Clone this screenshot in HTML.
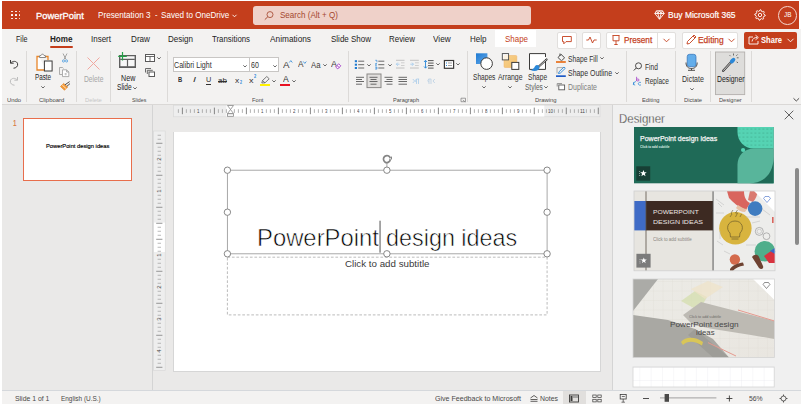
<!DOCTYPE html>
<html><head><meta charset="utf-8"><style>
html,body{margin:0;padding:0;width:801px;height:404px;overflow:hidden;background:#fff;}
body{position:relative;font-family:"Liberation Sans",sans-serif;}
.t{position:absolute;white-space:nowrap;line-height:1;transform-origin:0 50%;}
.r{position:absolute;box-sizing:border-box;}
svg{position:absolute;overflow:visible;}
</style></head><body>
<div class="r" style="left:2px;top:1px;width:797.3px;height:28.4px;background:#C43E1C"></div>
<div class="r" style="left:2px;top:29.4px;width:799px;height:75.6px;background:#F3F2F1"></div>
<div class="r" style="left:2px;top:104px;width:799px;height:1px;background:#DAD8D6"></div>
<div class="r" style="left:2px;top:105px;width:799px;height:285px;background:#EAE9E8"></div>
<div class="r" style="left:152px;top:105px;width:1px;height:285px;background:#D4D4D4"></div>
<div class="r" style="left:612px;top:105px;width:1px;height:285px;background:#D4D4D4"></div>
<div class="r" style="left:613px;top:105px;width:188px;height:285px;background:#F0F0F0"></div>
<div class="r" style="left:2px;top:389.6px;width:799px;height:1px;background:#D5D8DC"></div>
<div class="r" style="left:2px;top:390.6px;width:799px;height:14px;background:#F3F2F1"></div>
<div class="r" style="left:11.3px;top:10.5px;width:1.8px;height:1.8px;background:#fff;border-radius:0.5px"></div>
<div class="r" style="left:11.3px;top:14.1px;width:1.8px;height:1.8px;background:#fff;border-radius:0.5px"></div>
<div class="r" style="left:11.3px;top:17.7px;width:1.8px;height:1.8px;background:#fff;border-radius:0.5px"></div>
<div class="r" style="left:14.9px;top:10.5px;width:1.8px;height:1.8px;background:#fff;border-radius:0.5px"></div>
<div class="r" style="left:14.9px;top:14.1px;width:1.8px;height:1.8px;background:#fff;border-radius:0.5px"></div>
<div class="r" style="left:14.9px;top:17.7px;width:1.8px;height:1.8px;background:#fff;border-radius:0.5px"></div>
<div class="r" style="left:18.5px;top:10.5px;width:1.8px;height:1.8px;background:#fff;border-radius:0.5px"></div>
<div class="r" style="left:18.5px;top:14.1px;width:1.8px;height:1.8px;background:#fff;border-radius:0.5px"></div>
<div class="r" style="left:18.5px;top:17.7px;width:1.8px;height:1.8px;background:#fff;border-radius:0.5px"></div>
<div class="t" style="left:36.0px;top:10.7px;font-size:9.6px;font-weight:400;color:#fff;transform:scaleX(0.976);-webkit-text-stroke:0.3px #fff">PowerPoint</div>
<div class="t" style="left:97.5px;top:10.4px;font-size:9.5px;font-weight:400;color:#fff;transform:scaleX(0.857);">Presentation 3</div>
<div class="t" style="left:154.5px;top:10.4px;font-size:9.5px;font-weight:400;color:#fff;transform:scaleX(0.790);">-</div>
<div class="t" style="left:160.7px;top:10.4px;font-size:9.5px;font-weight:400;color:#fff;transform:scaleX(0.851);">Saved to OneDrive</div>
<svg style="left:232px;top:14px" width="5" height="4"><path d="M0.5 0.8 L2.5 2.8 L4.5 0.8" stroke="#fff" stroke-width="0.9" fill="none"/></svg>
<div class="r" style="left:253px;top:6px;width:278px;height:18.5px;background:#EFD1C9;border-radius:3px"></div>
<svg style="left:264px;top:11px" width="10" height="9"><circle cx="6" cy="3.6" r="3" stroke="#A9503A" stroke-width="0.9" fill="none"/><path d="M3.8 5.8 L0.8 8.6" stroke="#A9503A" stroke-width="1"/></svg>
<div class="t" style="left:280.0px;top:10.4px;font-size:9.5px;font-weight:400;color:#A4472F;transform:scaleX(0.848);">Search (Alt + Q)</div>
<svg style="left:654px;top:10px" width="11" height="10"><path d="M2.5 0.8 H8.5 L10.2 3.5 L5.5 9.2 L0.8 3.5 Z M0.8 3.5 H10.2 M3.8 3.5 L5.5 9.2 L7.2 3.5 M2.5 0.8 L3.8 3.5 L5.5 0.8 L7.2 3.5 L8.5 0.8" stroke="#fff" stroke-width="0.9" fill="none" stroke-linejoin="round"/></svg>
<div class="t" style="left:668.0px;top:10.3px;font-size:9.5px;font-weight:400;color:#fff;transform:scaleX(0.888);-webkit-text-stroke:0.2px #fff">Buy Microsoft 365</div>
<svg style="left:753.6px;top:9.1px" width="12" height="12"><path d="M6.00 0.80 L7.01 0.90 L7.49 2.40 L8.17 2.76 L9.68 2.32 L10.32 3.11 L9.60 4.51 L9.83 5.24 L11.20 6.00 L11.10 7.01 L9.60 7.49 L9.24 8.17 L9.68 9.68 L8.89 10.32 L7.49 9.60 L6.76 9.83 L6.00 11.20 L4.99 11.10 L4.51 9.60 L3.83 9.24 L2.32 9.68 L1.68 8.89 L2.40 7.49 L2.17 6.76 L0.80 6.00 L0.90 4.99 L2.40 4.51 L2.76 3.83 L2.32 2.32 L3.11 1.68 L4.51 2.40 L5.24 2.17 Z" stroke="#fff" stroke-width="0.9" fill="none" stroke-linejoin="round"/><circle cx="6" cy="6" r="1.7" stroke="#fff" stroke-width="0.9" fill="none"/></svg>
<div class="r" style="left:778.2px;top:6px;width:18.6px;height:18.6px;border:1px solid #F4D6CE;border-radius:50%"></div>
<div class="t" style="left:783.8px;top:12.2px;font-size:6.5px;font-weight:400;color:#fff;transform:scaleX(0.976);">JB</div>
<div class="t" style="left:15.5px;top:34.5px;font-size:9px;font-weight:400;color:#252423;transform:scaleX(0.793);">File</div>
<div class="t" style="left:50.0px;top:34.5px;font-size:9px;font-weight:700;color:#252423;transform:scaleX(0.900);">Home</div>
<div class="t" style="left:91.0px;top:34.5px;font-size:9px;font-weight:400;color:#252423;transform:scaleX(0.889);">Insert</div>
<div class="t" style="left:130.5px;top:34.5px;font-size:9px;font-weight:400;color:#252423;transform:scaleX(0.905);">Draw</div>
<div class="t" style="left:167.5px;top:34.5px;font-size:9px;font-weight:400;color:#252423;transform:scaleX(0.892);">Design</div>
<div class="t" style="left:212.0px;top:34.5px;font-size:9px;font-weight:400;color:#252423;transform:scaleX(0.870);">Transitions</div>
<div class="t" style="left:270.0px;top:34.5px;font-size:9px;font-weight:400;color:#252423;transform:scaleX(0.921);">Animations</div>
<div class="t" style="left:330.5px;top:34.5px;font-size:9px;font-weight:400;color:#252423;transform:scaleX(0.888);">Slide Show</div>
<div class="t" style="left:389.0px;top:34.5px;font-size:9px;font-weight:400;color:#252423;transform:scaleX(0.881);">Review</div>
<div class="t" style="left:433.0px;top:34.5px;font-size:9px;font-weight:400;color:#252423;transform:scaleX(0.915);">View</div>
<div class="t" style="left:469.5px;top:34.5px;font-size:9px;font-weight:400;color:#252423;transform:scaleX(0.891);">Help</div>
<div class="r" style="left:50px;top:45.8px;width:23px;height:2px;background:#C43E1C;border-radius:1px"></div>
<div class="r" style="left:495px;top:30px;width:41px;height:17px;background:#fff"></div>
<div class="t" style="left:504.5px;top:34.5px;font-size:9px;font-weight:400;color:#C43E1C;transform:scaleX(0.884);">Shape</div>
<div class="r" style="left:557px;top:31.5px;width:20px;height:17px;background:#fff;border:1px solid #E1DFDD;border-radius:2px"></div>
<div class="r" style="left:581.5px;top:31.5px;width:19.5px;height:17px;background:#fff;border:1px solid #E1DFDD;border-radius:2px"></div>
<svg style="left:562px;top:36.3px" width="10" height="9"><path d="M0.5 0.5 H9.3 V5.6 H4 L1.8 7.8 V5.6 H0.5 Z" stroke="#C43E1C" stroke-width="0.9" fill="none" stroke-linejoin="round"/></svg>
<svg style="left:585.5px;top:36px" width="11" height="8"><path d="M0.3 4 H2.5 L4 1 L6.5 7 L8 4 H10.7" stroke="#C43E1C" stroke-width="0.9" fill="none" stroke-linejoin="round"/></svg>
<div class="r" style="left:606px;top:31.5px;width:70px;height:17px;background:#fff;border:1px solid #E1DFDD;border-radius:2px"></div>
<div class="r" style="left:657px;top:32.5px;width:1px;height:15px;background:#E1DFDD"></div>
<svg style="left:612px;top:35px" width="8" height="10"><path d="M0.5 0.5 H7.5 M1 0.5 V5.8 H7 V0.5 M4 5.8 V9.5 M2.3 9.5 H5.7" stroke="#C43E1C" stroke-width="0.9" fill="none"/></svg>
<div class="t" style="left:623.8px;top:35.2px;font-size:9.5px;font-weight:400;color:#C43E1C;transform:scaleX(0.861);-webkit-text-stroke:0.25px #C43E1C">Present</div>
<svg style="left:663px;top:38px" width="7" height="5"><path d="M0.5 0.8 L3.5 3.8 L6.5 0.8" stroke="#C43E1C" stroke-width="0.9" fill="none"/></svg>
<div class="r" style="left:682px;top:31.5px;width:56px;height:17px;background:#fff;border:1px solid #E1DFDD;border-radius:2px"></div>
<svg style="left:686px;top:34px" width="11" height="11"><path d="M1 10 L1.5 7.5 L8 1 L10 3 L3.5 9.5 Z M7 2 L9 4" stroke="#C43E1C" stroke-width="0.9" fill="none" stroke-linejoin="round"/></svg>
<div class="t" style="left:698.3px;top:35.2px;font-size:9.5px;font-weight:400;color:#C43E1C;transform:scaleX(0.885);-webkit-text-stroke:0.25px #C43E1C">Editing</div>
<svg style="left:728px;top:38px" width="7" height="5"><path d="M0.5 0.8 L3.5 3.8 L6.5 0.8" stroke="#C43E1C" stroke-width="0.9" fill="none"/></svg>
<div class="r" style="left:744px;top:31.5px;width:53px;height:17px;background:#C43E1C;border-radius:2px"></div>
<svg style="left:748px;top:34px" width="12" height="11"><path d="M5 3 H1 V10 H10 V7 M4 7.5 C4.5 4.5 6.5 3.5 9 3.5 M7.5 1.2 L10.3 3.5 L7.5 5.8" stroke="#fff" stroke-width="0.9" fill="none" stroke-linejoin="round"/></svg>
<div class="t" style="left:761.2px;top:35.2px;font-size:9.5px;font-weight:700;color:#fff;transform:scaleX(0.799);">Share</div>
<svg style="left:787px;top:38px" width="7" height="5"><path d="M0.5 0.8 L3.5 3.8 L6.5 0.8" stroke="#fff" stroke-width="0.9" fill="none"/></svg>
<svg style="left:9px;top:59px" width="10" height="10"><path d="M1.5 1 V4.2 H4.7 M1.8 4 C3.5 1.8 7.8 1.6 8.6 4.8 C9.2 7.4 6.8 9.2 4.5 9.2" stroke="#3b3a39" stroke-width="1" fill="none"/></svg>
<svg style="left:9px;top:75.5px" width="10" height="10"><path d="M8.5 1 V4.2 H5.3 M8.2 4 C6.5 1.8 2.2 1.6 1.4 4.8 C0.8 7.4 3.2 9.2 5.5 9.2" stroke="#BDBDBD" stroke-width="1" fill="none"/></svg>
<div class="t" style="left:6.7px;top:96.9px;font-size:6px;font-weight:400;color:#4a4948;transform:scaleX(0.983);">Undo</div>
<div class="r" style="left:26px;top:51px;width:1px;height:51px;background:#DCDAD8"></div>
<svg style="left:35px;top:52.5px" width="19" height="19"><path d="M4 3.5 H2 V17 H11" stroke="#E8862A" stroke-width="1.3" fill="#fff"/><path d="M9 3.5 H13 V7" stroke="#E8862A" stroke-width="1.3" fill="none"/><path d="M4.5 4.5 V2.8 L6 2.5 L7.5 0.8 L9 2.5 L10.5 2.8 V4.5 Z" stroke="#7a7a7a" stroke-width="0.9" fill="#fff"/><rect x="9.4" y="8" width="7.7" height="10" stroke="#3b3a39" stroke-width="1" fill="#fff"/></svg>
<div class="t" style="left:34.9px;top:73.1px;font-size:8.3px;font-weight:400;color:#252423;transform:scaleX(0.759);">Paste</div>
<svg style="left:40.7px;top:86.1px" width="4" height="2.5"><path d="M0.3 0.3 L2 2 L3.7 0.3" stroke="#444" stroke-width="0.8" fill="none"/></svg>
<svg style="left:60.5px;top:53px" width="8" height="10"><path d="M2 0.5 L5 6.5 M6 0.5 L3 6.5" stroke="#8f8f8f" stroke-width="0.8"/><circle cx="2.5" cy="8" r="1.1" stroke="#4d9de0" stroke-width="0.8" fill="none"/><circle cx="5.6" cy="8" r="1.1" stroke="#4d9de0" stroke-width="0.8" fill="none"/></svg>
<svg style="left:59px;top:67px" width="11" height="11"><path d="M4.5 1.5 L3.6 0.5 H0.5 V7.5 H3" stroke="#9a9a9a" stroke-width="0.8" fill="none"/><path d="M3.5 2.8 H7.6 L9.8 5 V9.6 H3.5 Z M7.6 2.8 V5 H9.8" stroke="#9a9a9a" stroke-width="0.8" fill="#fff"/><rect x="6" y="6.5" width="1.5" height="1.5" fill="none" stroke="#bbb" stroke-width="0.5"/></svg>
<svg style="left:59.5px;top:81px" width="11" height="10"><path d="M0.5 5.5 L4.5 9.2 L7.6 6 L3.6 2.4 Z" fill="#F29A38" stroke="#E07B14" stroke-width="0.6"/><path d="M2.2 4 L6 7.5" stroke="#fff" stroke-width="0.7"/><path d="M5 3.8 L9.6 0.6 M6.8 5.4 L10 2.6" stroke="#3b3a39" stroke-width="0.9"/></svg>
<div class="t" style="left:38.8px;top:96.9px;font-size:6px;font-weight:400;color:#4a4948;transform:scaleX(0.981);">Clipboard</div>
<div class="r" style="left:76px;top:51px;width:1px;height:51px;background:#DCDAD8"></div>
<svg style="left:87px;top:57px" width="13" height="13"><path d="M0.5 0.5 L12.5 12.5 M12.5 0.5 L0.5 12.5" stroke="#F0A8A0" stroke-width="1"/></svg>
<div class="t" style="left:83.6px;top:75.0px;font-size:8.3px;font-weight:400;color:#A6A6A6;transform:scaleX(0.809);">Delete</div>
<div class="t" style="left:85.0px;top:96.9px;font-size:6px;font-weight:400;color:#C6C6C6;transform:scaleX(0.963);">Delete</div>
<div class="r" style="left:110px;top:51px;width:1px;height:51px;background:#DCDAD8"></div>
<svg style="left:118px;top:52px" width="20" height="17"><path d="M1.7 3.6 H17.3 V15.2 H1.7 Z" stroke="#5f5f5f" stroke-width="1.4" fill="#F7F7F7"/><path d="M1.5 15 H17.5" stroke="#5f5f5f" stroke-width="1.2"/><path d="M2.2 7.4 H16.8 M9.5 7.4 V14.8" stroke="#5f5f5f" stroke-width="1.2"/><path d="M4.5 0 V8.6 M0.2 4.3 H8.8" stroke="#22A046" stroke-width="1.2"/></svg>
<div class="t" style="left:120.7px;top:74.1px;font-size:8.3px;font-weight:400;color:#252423;transform:scaleX(0.861);">New</div>
<div class="t" style="left:116.9px;top:83.1px;font-size:8.3px;font-weight:400;color:#252423;transform:scaleX(0.791);">Slide</div>
<svg style="left:132.5px;top:86.8px" width="4" height="2.5"><path d="M0.3 0.3 L2 2 L3.7 0.3" stroke="#444" stroke-width="0.8" fill="none"/></svg>
<svg style="left:145px;top:54px" width="10" height="8"><rect x="0.5" y="0.5" width="9" height="7" stroke="#5a5a5a" stroke-width="1" fill="#fff"/><path d="M0.5 2.5 H9.5 M5 2.5 V7.5" stroke="#5a5a5a" stroke-width="0.9"/></svg>
<svg style="left:157px;top:57.3px" width="4" height="2.5"><path d="M0.3 0.3 L2 2 L3.7 0.3" stroke="#444" stroke-width="0.8" fill="none"/></svg>
<svg style="left:145px;top:67.5px" width="10" height="9"><path d="M0.5 0.5 H6 M0.5 0.5 V4.5 M2.3 2.3 H7.8 M2.3 2.3 V6" stroke="#5a5a5a" stroke-width="0.9" fill="none"/><rect x="4" y="4" width="5.5" height="4.5" stroke="#5a5a5a" stroke-width="1" fill="#fff"/></svg>
<div class="t" style="left:132.2px;top:96.9px;font-size:6px;font-weight:400;color:#4a4948;transform:scaleX(0.875);">Slides</div>
<div class="r" style="left:167px;top:51px;width:1px;height:51px;background:#DCDAD8"></div>
<div class="r" style="left:172.5px;top:57px;width:106px;height:14.5px;background:#fff;border:1px solid #C8C6C4"></div>
<div class="r" style="left:248.5px;top:57px;width:1px;height:14.5px;background:#C8C6C4"></div>
<div class="t" style="left:174.4px;top:60.5px;font-size:8.5px;font-weight:400;color:#323130;transform:scaleX(0.838);">Calibri Light</div>
<svg style="left:242.5px;top:64.6px" width="4" height="2.5"><path d="M0.3 0.3 L2 2 L3.7 0.3" stroke="#444" stroke-width="0.8" fill="none"/></svg>
<div class="t" style="left:250.6px;top:60.5px;font-size:8.5px;font-weight:400;color:#323130;transform:scaleX(0.825);">60</div>
<svg style="left:272.7px;top:64.8px" width="4" height="2.5"><path d="M0.3 0.3 L2 2 L3.7 0.3" stroke="#444" stroke-width="0.8" fill="none"/></svg>
<div class="t" style="left:283.0px;top:59.5px;font-size:9.5px;font-weight:400;color:#3b3a39;transform:scaleX(1.026);">A</div>
<svg style="left:289px;top:60px" width="4" height="3"><path d="M0.3 2.5 L1.8 0.6 L3.3 2.5" stroke="#2B88D8" stroke-width="0.8" fill="none"/></svg>
<div class="t" style="left:298.0px;top:60.7px;font-size:8.2px;font-weight:400;color:#3b3a39;transform:scaleX(1.006);">A</div>
<svg style="left:303px;top:60.5px" width="4" height="3"><path d="M0.3 0.5 L1.8 2.4 L3.3 0.5" stroke="#2B88D8" stroke-width="0.8" fill="none"/></svg>
<div class="t" style="left:311.0px;top:60.8px;font-size:8.5px;font-weight:400;color:#3b3a39;transform:scaleX(0.914);">Aa</div>
<svg style="left:322.5px;top:64.3px" width="4" height="2.5"><path d="M0.3 0.3 L2 2 L3.7 0.3" stroke="#444" stroke-width="0.8" fill="none"/></svg>
<div class="t" style="left:331.0px;top:59.8px;font-size:9px;font-weight:400;color:#3b3a39;transform:scaleX(0.999);">A</div>
<svg style="left:335px;top:63px" width="6.5" height="6.5"><path d="M0.6 4 L3.6 0.8 L5.8 2.8 L2.8 5.9 Z M2 2.6 L4.4 4.6" stroke="#A33DC6" stroke-width="0.9" fill="#fff"/></svg>
<div class="t" style="left:178.0px;top:76.4px;font-size:8px;font-weight:700;color:#323130;transform:scaleX(0.727);">B</div>
<div class="t" style="left:192.5px;top:76.4px;font-size:8px;font-weight:400;color:#323130;transform:scaleX(1.350);font-style:italic">I</div>
<div class="t" style="left:205.5px;top:75.8px;font-size:8px;font-weight:400;color:#323130;transform:scaleX(0.917);">U</div>
<div class="r" style="left:205.5px;top:84px;width:5.5px;height:0.8px;background:#323130"></div>
<div class="t" style="left:218.0px;top:76.8px;font-size:7.5px;font-weight:400;color:#323130;transform:scaleX(1.055);">ab</div>
<div class="r" style="left:217.8px;top:80.5px;width:9.2px;height:0.8px;background:#323130"></div>
<div class="t" style="left:234.8px;top:76.8px;font-size:8px;font-weight:400;color:#323130;transform:scaleX(1.050);">x</div>
<div class="t" style="left:239.5px;top:80.8px;font-size:4.5px;font-weight:700;color:#2B88D8;transform:scaleX(0.799);">2</div>
<div class="t" style="left:249.0px;top:76.8px;font-size:8px;font-weight:400;color:#323130;transform:scaleX(1.125);">x</div>
<div class="t" style="left:253.8px;top:74.8px;font-size:4.5px;font-weight:700;color:#2B88D8;transform:scaleX(0.879);">2</div>
<svg style="left:261px;top:76px" width="9" height="8"><path d="M0.8 7 L1.5 4.5 L5.8 0.5 L8.2 2.8 L4 6.8 Z M1.5 4.5 L4 6.8" stroke="#5a5a5a" stroke-width="0.8" fill="none" stroke-linejoin="round"/></svg>
<div class="r" style="left:260.4px;top:84px;width:9.4px;height:2px;background:#FFF100"></div>
<svg style="left:272.4px;top:80.2px" width="4" height="2.5"><path d="M0.3 0.3 L2 2 L3.7 0.3" stroke="#444" stroke-width="0.8" fill="none"/></svg>
<div class="t" style="left:282.7px;top:75.9px;font-size:8.2px;font-weight:400;color:#323130;transform:scaleX(1.060);">A</div>
<div class="r" style="left:280.4px;top:84px;width:9.6px;height:2px;background:#E81123"></div>
<svg style="left:292.4px;top:80.2px" width="4" height="2.5"><path d="M0.3 0.3 L2 2 L3.7 0.3" stroke="#444" stroke-width="0.8" fill="none"/></svg>
<div class="t" style="left:252.0px;top:96.9px;font-size:6px;font-weight:400;color:#4a4948;transform:scaleX(0.950);">Font</div>
<div class="r" style="left:347.5px;top:51px;width:1px;height:51px;background:#DCDAD8"></div>
<svg style="left:0;top:0" width="801" height="404"><rect x="354.8" y="60.2" width="2.2" height="2" fill="#1F7BD0"/><rect x="354.8" y="63.7" width="2.2" height="2" fill="#1F7BD0"/><rect x="354.8" y="67" width="2.2" height="2" fill="#1F7BD0"/><path d="M358.2 61.2 h6" stroke="#5a5a5a" stroke-width="0.9"/><path d="M358.2 64.7 h6" stroke="#5a5a5a" stroke-width="0.9"/><path d="M358.2 68 h6" stroke="#5a5a5a" stroke-width="0.9"/><path d="M375.3 60.3 h1.6 v2 M375.2 63.6 h1.6 l-1.6 1.6 h1.8 M375.2 67 h1.7 v2.1 h-1.7 M375.4 68 h1.4" stroke="#2B88D8" stroke-width="0.7" fill="none"/><path d="M378.3 61.2 h6" stroke="#5a5a5a" stroke-width="0.9"/><path d="M378.3 64.7 h6" stroke="#5a5a5a" stroke-width="0.9"/><path d="M378.3 68 h6" stroke="#5a5a5a" stroke-width="0.9"/><path d="M396 60.3 h8.5" stroke="#B5B5B5" stroke-width="0.8"/><path d="M396 68 h8.5" stroke="#B5B5B5" stroke-width="0.8"/><path d="M401 62.8 h3.5" stroke="#C5C5C5" stroke-width="0.8"/><path d="M401 65.5 h3.5" stroke="#C5C5C5" stroke-width="0.8"/><path d="M399.5 64.2 h-3 M397.8 62.6 l-1.5 1.6 l1.5 1.6" stroke="#9CC8EE" stroke-width="0.8" fill="none"/><path d="M410 60.3 h8.8" stroke="#B5B5B5" stroke-width="0.8"/><path d="M410 68 h8.8" stroke="#B5B5B5" stroke-width="0.8"/><path d="M415 62.8 h3.8" stroke="#C5C5C5" stroke-width="0.8"/><path d="M415 65.5 h3.8" stroke="#C5C5C5" stroke-width="0.8"/><path d="M410.3 64.2 h3 M412 62.6 l1.5 1.6 l-1.5 1.6" stroke="#9CC8EE" stroke-width="0.8" fill="none"/><path d="M425.5 60.5 v7.5 M424 62 l1.5 -1.7 l1.5 1.7 M424 66.5 l1.5 1.7 l1.5 -1.7" stroke="#2B88D8" stroke-width="0.9" fill="none"/><path d="M428 60.6 h5.6" stroke="#444" stroke-width="0.9"/><path d="M428 63.1 h5.6" stroke="#444" stroke-width="0.9"/><path d="M428 65.6 h5.6" stroke="#444" stroke-width="0.9"/><path d="M428 68.1 h5.6" stroke="#444" stroke-width="0.9"/><rect x="444.4" y="60.5" width="9.2" height="7.8" stroke="#3b3a39" stroke-width="1.2" fill="#fff"/><rect x="446" y="62.5" width="1" height="1" fill="#2B88D8"/><rect x="446" y="65" width="1" height="1" fill="#2B88D8"/><path d="M448 63 h4" stroke="#7a7a7a" stroke-width="0.7"/><path d="M448 65.5 h4" stroke="#7a7a7a" stroke-width="0.7"/><rect x="367" y="74" width="14" height="13.6" stroke="#8A8886" stroke-width="1" fill="#E1DFDD"/><path d="M356 77.3 h8" stroke="#5a5a5a" stroke-width="0.9"/><path d="M356 79.5 h6" stroke="#5a5a5a" stroke-width="0.9"/><path d="M356 81.5 h8" stroke="#5a5a5a" stroke-width="0.9"/><path d="M356 84.2 h6" stroke="#5a5a5a" stroke-width="0.9"/><path d="M369.5 77.3 h8" stroke="#5a5a5a" stroke-width="0.9"/><path d="M370.5 79.5 h6" stroke="#5a5a5a" stroke-width="0.9"/><path d="M369.5 81.5 h8" stroke="#5a5a5a" stroke-width="0.9"/><path d="M370.5 84.2 h6" stroke="#5a5a5a" stroke-width="0.9"/><path d="M384.5 77.3 h8" stroke="#5a5a5a" stroke-width="0.9"/><path d="M386.5 79.5 h6" stroke="#5a5a5a" stroke-width="0.9"/><path d="M384.5 81.5 h8" stroke="#5a5a5a" stroke-width="0.9"/><path d="M386.5 84.2 h6" stroke="#5a5a5a" stroke-width="0.9"/><path d="M398.5 77.3 h8.5" stroke="#5a5a5a" stroke-width="0.9"/><path d="M398.5 79.5 h8.5" stroke="#5a5a5a" stroke-width="0.9"/><path d="M398.5 81.5 h8.5" stroke="#5a5a5a" stroke-width="0.9"/><path d="M398.5 84.2 h8.5" stroke="#5a5a5a" stroke-width="0.9"/><path d="M412.8 79 l1.8 2 l-1.8 2 M416.5 79 v5 M418.5 79 v5 M416.5 79 h2.6 M416.5 79.5 a1.2 1.2 0 0 0 0 2.4" stroke="#A9CBEA" stroke-width="0.8" fill="none"/><path d="M434.8 79 l-1.8 2 l1.8 2 M429 79 v5 M431 79 v5 M428.5 79 h2.6 M429 79.5 a1.2 1.2 0 0 0 0 2.4" stroke="#B9CFE3" stroke-width="0.8" fill="none"/><path d="M461 98.2 h4.5 v3.5 M461 98.2 v3.5 h4.5 M462.8 100 l2.5 2" stroke="#7a7a7a" stroke-width="0.7" fill="none"/></svg>
<svg style="left:367.3px;top:63.5px" width="4" height="2.5"><path d="M0.3 0.3 L2 2 L3.7 0.3" stroke="#444" stroke-width="0.8" fill="none"/></svg>
<svg style="left:387.6px;top:63.5px" width="4" height="2.5"><path d="M0.3 0.3 L2 2 L3.7 0.3" stroke="#444" stroke-width="0.8" fill="none"/></svg>
<svg style="left:435.8px;top:63.39999999999999px" width="4" height="2.5"><path d="M0.3 0.3 L2 2 L3.7 0.3" stroke="#444" stroke-width="0.8" fill="none"/></svg>
<svg style="left:455.8px;top:63.39999999999999px" width="4" height="2.5"><path d="M0.3 0.3 L2 2 L3.7 0.3" stroke="#444" stroke-width="0.8" fill="none"/></svg>
<div class="t" style="left:393.0px;top:96.9px;font-size:6px;font-weight:400;color:#4a4948;transform:scaleX(0.928);">Paragraph</div>
<div class="r" style="left:466.5px;top:51px;width:1px;height:51px;background:#DCDAD8"></div>
<svg style="left:0;top:0" width="801" height="404"><defs><linearGradient id="gb" x1="0" y1="0" x2="1" y2="1"><stop offset="0" stop-color="#1E7AD2"/><stop offset="1" stop-color="#63A9EA"/></linearGradient><linearGradient id="go" x1="0" y1="0" x2="1" y2="1"><stop offset="0" stop-color="#F7D28F"/><stop offset="1" stop-color="#F3BF6A"/></linearGradient></defs><rect x="476" y="53.3" width="11.4" height="10.7" fill="url(#gb)"/><circle cx="486.6" cy="63.6" r="5.8" fill="#fff" stroke="#3b3a39" stroke-width="1"/><rect x="504" y="55.5" width="12.8" height="12" rx="1" fill="url(#go)" stroke="#F0B062" stroke-width="0.5"/><rect x="502.3" y="53.6" width="6.3" height="6.3" fill="#fff" fill-opacity="0.75" stroke="#4a4a4a" stroke-width="0.9"/><rect x="511.8" y="62.4" width="7" height="7" fill="#fff" stroke="#3b3a39" stroke-width="1"/><path d="M545.5 59 V69.4 H529.5 V53.6 H545.5 V57" stroke="#3b3a39" stroke-width="1" fill="#fff"/><path d="M546.6 59.4 L538.8 66.6" stroke="#3b3a39" stroke-width="2" stroke-linecap="round"/><path d="M546.3 59.7 L539.2 66.3" stroke="#fff" stroke-width="0.7" stroke-linecap="round"/><path d="M530.5 70 C532.5 69.8 534 68.2 535 66.2 C536 64.8 538 64.8 539 66 C540 67.4 539.4 69 538 70 C536 71.3 533 71.2 530.5 70 Z" fill="#2B88D8"/><path d="M558 57.5 L561 54.3 L564.6 57.8 L561.5 60.8 Z M560 53.5 V56" stroke="#3b3a39" stroke-width="0.9" fill="none" stroke-linejoin="round"/><rect x="556" y="61.2" width="9.8" height="1.6" fill="#E8680E"/><path d="M557 73.5 V67.6 H563" stroke="#9a9a9a" stroke-width="0.8" fill="none"/><path d="M558.5 73.5 L559 71.8 L564 67 L565.3 68.3 L560.3 73.1 Z" stroke="#2B88D8" stroke-width="0.9" fill="none" stroke-linejoin="round"/><rect x="556" y="75.3" width="9.8" height="1.7" fill="#1E5BC6"/><path d="M557.2 86.5 V83.6 H562" stroke="#7a7a7a" stroke-width="0.8" fill="none"/><rect x="558.8" y="85" width="5.8" height="4.8" stroke="#5a5a5a" stroke-width="0.9" fill="#fff"/></svg>
<div class="t" style="left:473.0px;top:73.2px;font-size:8.5px;font-weight:400;color:#323130;transform:scaleX(0.777);">Shapes</div>
<svg style="left:482px;top:85.6px" width="4" height="2.5"><path d="M0.3 0.3 L2 2 L3.7 0.3" stroke="#444" stroke-width="0.8" fill="none"/></svg>
<div class="t" style="left:498.0px;top:73.2px;font-size:8.5px;font-weight:400;color:#323130;transform:scaleX(0.810);">Arrange</div>
<svg style="left:508.1px;top:85.6px" width="4" height="2.5"><path d="M0.3 0.3 L2 2 L3.7 0.3" stroke="#444" stroke-width="0.8" fill="none"/></svg>
<div class="t" style="left:528.0px;top:73.2px;font-size:8.5px;font-weight:400;color:#323130;transform:scaleX(0.777);">Shape</div>
<div class="t" style="left:525.2px;top:82.5px;font-size:8.5px;font-weight:400;color:#605E5C;transform:scaleX(0.769);">Styles</div>
<svg style="left:544px;top:85.6px" width="4" height="2.5"><path d="M0.3 0.3 L2 2 L3.7 0.3" stroke="#444" stroke-width="0.8" fill="none"/></svg>
<div class="t" style="left:568.0px;top:54.9px;font-size:8.5px;font-weight:400;color:#323130;transform:scaleX(0.788);">Shape Fill</div>
<svg style="left:600px;top:57.3px" width="4" height="2.5"><path d="M0.3 0.3 L2 2 L3.7 0.3" stroke="#444" stroke-width="0.8" fill="none"/></svg>
<div class="t" style="left:568.0px;top:68.8px;font-size:8.5px;font-weight:400;color:#323130;transform:scaleX(0.817);">Shape Outline</div>
<svg style="left:614.8px;top:71.6px" width="4" height="2.5"><path d="M0.3 0.3 L2 2 L3.7 0.3" stroke="#444" stroke-width="0.8" fill="none"/></svg>
<div class="t" style="left:568.4px;top:82.5px;font-size:8.5px;font-weight:400;color:#807F7E;transform:scaleX(0.818);">Duplicate</div>
<div class="t" style="left:535.4px;top:96.9px;font-size:6px;font-weight:400;color:#4a4948;transform:scaleX(0.981);">Drawing</div>
<div class="r" style="left:625.5px;top:51px;width:1px;height:51px;background:#DCDAD8"></div>
<svg style="left:0;top:0" width="801" height="404"><circle cx="638.5" cy="65.8" r="3" stroke="#3b3a39" stroke-width="0.9" fill="none"/><path d="M636.3 68 L633.8 70.5" stroke="#3b3a39" stroke-width="1"/><path d="M636.6 76.8 V81 M636.6 79.6 C637 78.6 639 78.6 639 80 C639 81.4 637 81.4 636.6 80.4" stroke="#A33DC6" stroke-width="0.8" fill="none"/><path d="M633.8 82.2 L633.3 84.5 L635.2 85 M633.5 84.4 C633.5 81.8 635.5 81.2 636.2 82" stroke="#2B88D8" stroke-width="0.8" fill="none"/><path d="M641 82.6 C640 82 638.6 82.3 638.3 83.5 C638.2 85 640 85.6 641 84.8" stroke="#2B88D8" stroke-width="0.8" fill="none"/><rect x="687.2" y="54.3" width="8.8" height="12.4" rx="2.4" ry="2.4" fill="#63ADEA" stroke="#2F6FB5" stroke-width="0.7"/><path d="M686 62.5 C686 66.5 688 68.5 691.5 68.5 C695 68.5 697.2 66.5 697.2 62.5 M691.5 68.5 V70.2 M688 70.3 H695" stroke="#3b3a39" stroke-width="0.9" fill="none"/><rect x="715.5" y="52" width="29.2" height="42.6" fill="#DEDDDB" stroke="#B3B0AD" stroke-width="0.9"/><path d="M723.2 70.8 L731 62.3" stroke="#3b3a39" stroke-width="2.3" stroke-linecap="round"/><path d="M723.5 70.4 L730.6 62.7" stroke="#fff" stroke-width="0.8" stroke-linecap="round"/><ellipse cx="732.6" cy="60.6" rx="2" ry="3.2" transform="rotate(42 732.6 60.6)" fill="#2B88D8"/><path d="M733.5 53.5 v2 M738.6 57.8 h-1.8 M737.6 54.5 l-1.3 1.3 M729.6 55.2 l1 1 M738 62.8 l-1.4 -0.9" stroke="#3b3a39" stroke-width="0.7"/><path d="M793.5 98.3 L796.3 101 L799.1 98.3" stroke="#3b3a39" stroke-width="0.9" fill="none"/></svg>
<div class="t" style="left:644.7px;top:62.5px;font-size:8.5px;font-weight:400;color:#323130;transform:scaleX(0.780);">Find</div>
<div class="t" style="left:645.1px;top:77.0px;font-size:8.5px;font-weight:400;color:#323130;transform:scaleX(0.766);">Replace</div>
<div class="t" style="left:641.5px;top:96.9px;font-size:6px;font-weight:400;color:#4a4948;transform:scaleX(0.954);">Editing</div>
<div class="r" style="left:675.2px;top:51px;width:1px;height:51px;background:#DCDAD8"></div>
<div class="t" style="left:681.8px;top:75.3px;font-size:8.5px;font-weight:400;color:#323130;transform:scaleX(0.828);">Dictate</div>
<svg style="left:690.3px;top:88.1px" width="4" height="2.5"><path d="M0.3 0.3 L2 2 L3.7 0.3" stroke="#444" stroke-width="0.8" fill="none"/></svg>
<div class="t" style="left:683.6px;top:96.9px;font-size:6px;font-weight:400;color:#4a4948;transform:scaleX(0.964);">Dictate</div>
<div class="r" style="left:709.5px;top:51px;width:1px;height:51px;background:#DCDAD8"></div>
<div class="t" style="left:716.8px;top:75.0px;font-size:8.5px;font-weight:400;color:#252423;transform:scaleX(0.808);">Designer</div>
<div class="t" style="left:718.9px;top:96.9px;font-size:6px;font-weight:400;color:#4a4948;transform:scaleX(0.945);">Designer</div>
<div class="r" style="left:750.8px;top:51px;width:1px;height:51px;background:#DCDAD8"></div>
<div class="t" style="left:12.6px;top:117.5px;font-size:9.5px;font-weight:400;color:#D9773F;transform:scaleX(0.681);-webkit-text-stroke:0.2px #D9773F">1</div>
<div class="r" style="left:23.2px;top:117.9px;width:108.9px;height:62.8px;background:#fff;border:1.7px solid #E86E4C"></div>
<div class="t" style="left:46.0px;top:144.2px;font-size:5.5px;font-weight:400;color:#000;transform:scaleX(1.047);-webkit-text-stroke:0.15px #000">PowerPoint design ideas</div>
<svg style="left:0;top:0" width="801" height="404"><rect x="173.5" y="105.2" width="426.5" height="11.6" fill="#EEEEEE" stroke="#D9D9D9" stroke-width="0.7"/><rect x="226.3" y="105.6" width="318" height="10.9" fill="#FFFFFF"/><rect x="177.9" y="109.2" width="0.8" height="3.7" fill="#A0A0A0"/><rect x="181.9" y="107.6" width="0.9" height="6.6" fill="#7a7a7a"/><rect x="185.9" y="109.2" width="0.8" height="3.7" fill="#A0A0A0"/><rect x="189.9" y="109.2" width="0.8" height="3.7" fill="#A0A0A0"/><rect x="193.9" y="109.2" width="0.8" height="3.7" fill="#A0A0A0"/><rect x="201.9" y="109.2" width="0.8" height="3.7" fill="#A0A0A0"/><rect x="205.9" y="109.2" width="0.8" height="3.7" fill="#A0A0A0"/><rect x="209.9" y="109.2" width="0.8" height="3.7" fill="#A0A0A0"/><rect x="213.9" y="107.6" width="0.9" height="6.6" fill="#7a7a7a"/><rect x="217.9" y="109.2" width="0.8" height="3.7" fill="#A0A0A0"/><rect x="221.9" y="109.2" width="0.8" height="3.7" fill="#A0A0A0"/><rect x="225.9" y="109.2" width="0.8" height="3.7" fill="#A0A0A0"/><rect x="233.9" y="109.2" width="0.8" height="3.7" fill="#A0A0A0"/><rect x="237.9" y="109.2" width="0.8" height="3.7" fill="#A0A0A0"/><rect x="241.9" y="109.2" width="0.8" height="3.7" fill="#A0A0A0"/><rect x="245.9" y="107.6" width="0.9" height="6.6" fill="#7a7a7a"/><rect x="249.9" y="109.2" width="0.8" height="3.7" fill="#A0A0A0"/><rect x="253.9" y="109.2" width="0.8" height="3.7" fill="#A0A0A0"/><rect x="257.9" y="109.2" width="0.8" height="3.7" fill="#A0A0A0"/><rect x="265.9" y="109.2" width="0.8" height="3.7" fill="#A0A0A0"/><rect x="269.9" y="109.2" width="0.8" height="3.7" fill="#A0A0A0"/><rect x="273.9" y="109.2" width="0.8" height="3.7" fill="#A0A0A0"/><rect x="277.9" y="107.6" width="0.9" height="6.6" fill="#7a7a7a"/><rect x="281.9" y="109.2" width="0.8" height="3.7" fill="#A0A0A0"/><rect x="285.9" y="109.2" width="0.8" height="3.7" fill="#A0A0A0"/><rect x="289.9" y="109.2" width="0.8" height="3.7" fill="#A0A0A0"/><rect x="297.9" y="109.2" width="0.8" height="3.7" fill="#A0A0A0"/><rect x="301.9" y="109.2" width="0.8" height="3.7" fill="#A0A0A0"/><rect x="305.9" y="109.2" width="0.8" height="3.7" fill="#A0A0A0"/><rect x="309.9" y="107.6" width="0.9" height="6.6" fill="#7a7a7a"/><rect x="313.9" y="109.2" width="0.8" height="3.7" fill="#A0A0A0"/><rect x="317.9" y="109.2" width="0.8" height="3.7" fill="#A0A0A0"/><rect x="321.9" y="109.2" width="0.8" height="3.7" fill="#A0A0A0"/><rect x="329.9" y="109.2" width="0.8" height="3.7" fill="#A0A0A0"/><rect x="333.9" y="109.2" width="0.8" height="3.7" fill="#A0A0A0"/><rect x="337.9" y="109.2" width="0.8" height="3.7" fill="#A0A0A0"/><rect x="341.9" y="107.6" width="0.9" height="6.6" fill="#7a7a7a"/><rect x="345.9" y="109.2" width="0.8" height="3.7" fill="#A0A0A0"/><rect x="349.9" y="109.2" width="0.8" height="3.7" fill="#A0A0A0"/><rect x="353.9" y="109.2" width="0.8" height="3.7" fill="#A0A0A0"/><rect x="361.9" y="109.2" width="0.8" height="3.7" fill="#A0A0A0"/><rect x="365.9" y="109.2" width="0.8" height="3.7" fill="#A0A0A0"/><rect x="369.9" y="109.2" width="0.8" height="3.7" fill="#A0A0A0"/><rect x="373.9" y="107.6" width="0.9" height="6.6" fill="#7a7a7a"/><rect x="377.9" y="109.2" width="0.8" height="3.7" fill="#A0A0A0"/><rect x="381.9" y="109.2" width="0.8" height="3.7" fill="#A0A0A0"/><rect x="385.9" y="109.2" width="0.8" height="3.7" fill="#A0A0A0"/><rect x="393.9" y="109.2" width="0.8" height="3.7" fill="#A0A0A0"/><rect x="397.9" y="109.2" width="0.8" height="3.7" fill="#A0A0A0"/><rect x="401.9" y="109.2" width="0.8" height="3.7" fill="#A0A0A0"/><rect x="405.9" y="107.6" width="0.9" height="6.6" fill="#7a7a7a"/><rect x="409.9" y="109.2" width="0.8" height="3.7" fill="#A0A0A0"/><rect x="413.9" y="109.2" width="0.8" height="3.7" fill="#A0A0A0"/><rect x="417.9" y="109.2" width="0.8" height="3.7" fill="#A0A0A0"/><rect x="425.9" y="109.2" width="0.8" height="3.7" fill="#A0A0A0"/><rect x="429.9" y="109.2" width="0.8" height="3.7" fill="#A0A0A0"/><rect x="433.9" y="109.2" width="0.8" height="3.7" fill="#A0A0A0"/><rect x="437.9" y="107.6" width="0.9" height="6.6" fill="#7a7a7a"/><rect x="441.9" y="109.2" width="0.8" height="3.7" fill="#A0A0A0"/><rect x="445.9" y="109.2" width="0.8" height="3.7" fill="#A0A0A0"/><rect x="449.9" y="109.2" width="0.8" height="3.7" fill="#A0A0A0"/><rect x="457.9" y="109.2" width="0.8" height="3.7" fill="#A0A0A0"/><rect x="461.9" y="109.2" width="0.8" height="3.7" fill="#A0A0A0"/><rect x="465.9" y="109.2" width="0.8" height="3.7" fill="#A0A0A0"/><rect x="469.9" y="107.6" width="0.9" height="6.6" fill="#7a7a7a"/><rect x="473.9" y="109.2" width="0.8" height="3.7" fill="#A0A0A0"/><rect x="477.9" y="109.2" width="0.8" height="3.7" fill="#A0A0A0"/><rect x="481.9" y="109.2" width="0.8" height="3.7" fill="#A0A0A0"/><rect x="489.9" y="109.2" width="0.8" height="3.7" fill="#A0A0A0"/><rect x="493.9" y="109.2" width="0.8" height="3.7" fill="#A0A0A0"/><rect x="497.9" y="109.2" width="0.8" height="3.7" fill="#A0A0A0"/><rect x="501.9" y="107.6" width="0.9" height="6.6" fill="#7a7a7a"/><rect x="505.9" y="109.2" width="0.8" height="3.7" fill="#A0A0A0"/><rect x="509.9" y="109.2" width="0.8" height="3.7" fill="#A0A0A0"/><rect x="513.9" y="109.2" width="0.8" height="3.7" fill="#A0A0A0"/><rect x="521.9" y="109.2" width="0.8" height="3.7" fill="#A0A0A0"/><rect x="525.9" y="109.2" width="0.8" height="3.7" fill="#A0A0A0"/><rect x="529.9" y="109.2" width="0.8" height="3.7" fill="#A0A0A0"/><rect x="533.8" y="107.6" width="0.9" height="6.6" fill="#7a7a7a"/><rect x="537.9" y="109.2" width="0.8" height="3.7" fill="#A0A0A0"/><rect x="541.9" y="109.2" width="0.8" height="3.7" fill="#A0A0A0"/><rect x="545.9" y="109.2" width="0.8" height="3.7" fill="#A0A0A0"/><rect x="553.9" y="109.2" width="0.8" height="3.7" fill="#A0A0A0"/><rect x="557.9" y="109.2" width="0.8" height="3.7" fill="#A0A0A0"/><rect x="561.9" y="109.2" width="0.8" height="3.7" fill="#A0A0A0"/><rect x="565.8" y="107.6" width="0.9" height="6.6" fill="#7a7a7a"/><rect x="569.9" y="109.2" width="0.8" height="3.7" fill="#A0A0A0"/><rect x="573.9" y="109.2" width="0.8" height="3.7" fill="#A0A0A0"/><rect x="577.9" y="109.2" width="0.8" height="3.7" fill="#A0A0A0"/><rect x="585.9" y="109.2" width="0.8" height="3.7" fill="#A0A0A0"/><rect x="589.9" y="109.2" width="0.8" height="3.7" fill="#A0A0A0"/><rect x="593.9" y="109.2" width="0.8" height="3.7" fill="#A0A0A0"/><rect x="597.8" y="107.6" width="0.9" height="6.6" fill="#7a7a7a"/></svg>
<div class="t" style="left:197.1px;top:108.0px;font-size:6px;font-weight:400;color:#444;transform:scaleX(0.719);">1</div>
<div class="t" style="left:261.1px;top:108.0px;font-size:6px;font-weight:400;color:#444;transform:scaleX(0.719);">1</div>
<div class="t" style="left:293.1px;top:108.0px;font-size:6px;font-weight:400;color:#444;transform:scaleX(0.719);">2</div>
<div class="t" style="left:325.1px;top:108.0px;font-size:6px;font-weight:400;color:#444;transform:scaleX(0.719);">3</div>
<div class="t" style="left:357.1px;top:108.0px;font-size:6px;font-weight:400;color:#444;transform:scaleX(0.719);">4</div>
<div class="t" style="left:389.1px;top:108.0px;font-size:6px;font-weight:400;color:#444;transform:scaleX(0.719);">5</div>
<div class="t" style="left:421.1px;top:108.0px;font-size:6px;font-weight:400;color:#444;transform:scaleX(0.719);">6</div>
<div class="t" style="left:453.1px;top:108.0px;font-size:6px;font-weight:400;color:#444;transform:scaleX(0.719);">7</div>
<div class="t" style="left:485.1px;top:108.0px;font-size:6px;font-weight:400;color:#444;transform:scaleX(0.719);">8</div>
<div class="t" style="left:517.1px;top:108.0px;font-size:6px;font-weight:400;color:#444;transform:scaleX(0.719);">9</div>
<div class="t" style="left:547.8px;top:108.0px;font-size:6px;font-weight:400;color:#444;transform:scaleX(0.749);">10</div>
<div class="t" style="left:579.8px;top:108.0px;font-size:6px;font-weight:400;color:#444;transform:scaleX(0.803);">11</div>
<svg style="left:226.5px;top:105px" width="8" height="12"><path d="M0.5 0.5 H6.5 L3.5 4.5 Z M3.5 4.5 L0.5 8.5 H6.5 Z" fill="#fff" stroke="#8a8a8a" stroke-width="0.8"/><rect x="0.5" y="8.8" width="6" height="2.5" fill="#fff" stroke="#8a8a8a" stroke-width="0.8"/></svg>
<svg style="left:0;top:0" width="801" height="404"><rect x="153.6" y="131" width="11.6" height="239.6" fill="#EEEEEE" stroke="#D9D9D9" stroke-width="0.7"/><rect x="154" y="222.6" width="10.9" height="29.4" fill="#FFFFFF"/><rect x="157.6" y="134.8" width="3.4" height="0.8" fill="#A8A8A8"/><rect x="157.6" y="138.8" width="3.4" height="0.8" fill="#A8A8A8"/><rect x="156.2" y="142.8" width="6.2" height="0.9" fill="#8a8a8a"/><rect x="157.6" y="146.8" width="3.4" height="0.8" fill="#A8A8A8"/><rect x="157.6" y="150.8" width="3.4" height="0.8" fill="#A8A8A8"/><rect x="157.6" y="154.8" width="3.4" height="0.8" fill="#A8A8A8"/><rect x="157.6" y="162.8" width="3.4" height="0.8" fill="#A8A8A8"/><rect x="157.6" y="166.8" width="3.4" height="0.8" fill="#A8A8A8"/><rect x="157.6" y="170.8" width="3.4" height="0.8" fill="#A8A8A8"/><rect x="156.2" y="174.8" width="6.2" height="0.9" fill="#8a8a8a"/><rect x="157.6" y="178.8" width="3.4" height="0.8" fill="#A8A8A8"/><rect x="157.6" y="182.8" width="3.4" height="0.8" fill="#A8A8A8"/><rect x="157.6" y="186.8" width="3.4" height="0.8" fill="#A8A8A8"/><rect x="157.6" y="194.8" width="3.4" height="0.8" fill="#A8A8A8"/><rect x="157.6" y="198.8" width="3.4" height="0.8" fill="#A8A8A8"/><rect x="157.6" y="202.8" width="3.4" height="0.8" fill="#A8A8A8"/><rect x="156.2" y="206.8" width="6.2" height="0.9" fill="#8a8a8a"/><rect x="157.6" y="210.8" width="3.4" height="0.8" fill="#A8A8A8"/><rect x="157.6" y="214.8" width="3.4" height="0.8" fill="#A8A8A8"/><rect x="157.6" y="218.8" width="3.4" height="0.8" fill="#A8A8A8"/><rect x="156.2" y="222.8" width="6.2" height="0.9" fill="#8a8a8a"/><rect x="157.6" y="226.8" width="3.4" height="0.8" fill="#A8A8A8"/><rect x="157.6" y="230.8" width="3.4" height="0.8" fill="#A8A8A8"/><rect x="157.6" y="234.8" width="3.4" height="0.8" fill="#A8A8A8"/><rect x="156.2" y="238.8" width="6.2" height="0.9" fill="#8a8a8a"/><rect x="157.6" y="242.8" width="3.4" height="0.8" fill="#A8A8A8"/><rect x="157.6" y="246.8" width="3.4" height="0.8" fill="#A8A8A8"/><rect x="157.6" y="250.8" width="3.4" height="0.8" fill="#A8A8A8"/><rect x="157.6" y="258.8" width="3.4" height="0.8" fill="#A8A8A8"/><rect x="157.6" y="262.8" width="3.4" height="0.8" fill="#A8A8A8"/><rect x="157.6" y="266.8" width="3.4" height="0.8" fill="#A8A8A8"/><rect x="156.2" y="270.8" width="6.2" height="0.9" fill="#8a8a8a"/><rect x="157.6" y="274.8" width="3.4" height="0.8" fill="#A8A8A8"/><rect x="157.6" y="278.8" width="3.4" height="0.8" fill="#A8A8A8"/><rect x="157.6" y="282.8" width="3.4" height="0.8" fill="#A8A8A8"/><rect x="157.6" y="290.8" width="3.4" height="0.8" fill="#A8A8A8"/><rect x="157.6" y="294.8" width="3.4" height="0.8" fill="#A8A8A8"/><rect x="157.6" y="298.8" width="3.4" height="0.8" fill="#A8A8A8"/><rect x="156.2" y="302.8" width="6.2" height="0.9" fill="#8a8a8a"/><rect x="157.6" y="306.8" width="3.4" height="0.8" fill="#A8A8A8"/><rect x="157.6" y="310.8" width="3.4" height="0.8" fill="#A8A8A8"/><rect x="157.6" y="314.8" width="3.4" height="0.8" fill="#A8A8A8"/><rect x="157.6" y="322.8" width="3.4" height="0.8" fill="#A8A8A8"/><rect x="157.6" y="326.8" width="3.4" height="0.8" fill="#A8A8A8"/><rect x="157.6" y="330.8" width="3.4" height="0.8" fill="#A8A8A8"/><rect x="156.2" y="334.8" width="6.2" height="0.9" fill="#8a8a8a"/><rect x="157.6" y="338.8" width="3.4" height="0.8" fill="#A8A8A8"/><rect x="157.6" y="342.8" width="3.4" height="0.8" fill="#A8A8A8"/><rect x="157.6" y="346.8" width="3.4" height="0.8" fill="#A8A8A8"/><rect x="157.6" y="354.8" width="3.4" height="0.8" fill="#A8A8A8"/><rect x="157.6" y="358.8" width="3.4" height="0.8" fill="#A8A8A8"/><rect x="157.6" y="362.8" width="3.4" height="0.8" fill="#A8A8A8"/><rect x="156.2" y="366.8" width="6.2" height="0.9" fill="#8a8a8a"/></svg>
<div class="t" style="left:156.3px;top:188.2px;width:6px;height:6px;font-size:6px;color:#444;text-align:center;transform:rotate(-90deg);transform-origin:50% 50%">1</div>
<div class="t" style="left:156.3px;top:156.2px;width:6px;height:6px;font-size:6px;color:#444;text-align:center;transform:rotate(-90deg);transform-origin:50% 50%">2</div>
<div class="t" style="left:156.3px;top:252.2px;width:6px;height:6px;font-size:6px;color:#444;text-align:center;transform:rotate(-90deg);transform-origin:50% 50%">1</div>
<div class="t" style="left:156.3px;top:284.2px;width:6px;height:6px;font-size:6px;color:#444;text-align:center;transform:rotate(-90deg);transform-origin:50% 50%">2</div>
<div class="t" style="left:156.3px;top:316.2px;width:6px;height:6px;font-size:6px;color:#444;text-align:center;transform:rotate(-90deg);transform-origin:50% 50%">3</div>
<div class="t" style="left:156.3px;top:348.2px;width:6px;height:6px;font-size:6px;color:#444;text-align:center;transform:rotate(-90deg);transform-origin:50% 50%">4</div>
<div class="r" style="left:173.3px;top:131.5px;width:427.5px;height:240.2px;background:#fff;border:1px solid #D6D6D6;border-top:0"></div>
<svg style="left:0;top:0" width="801" height="404"><rect x="227.4" y="257.2" width="319.7" height="57.7" fill="none" stroke="#B4B4B4" stroke-width="0.9" stroke-dasharray="2.7 1.8"/><rect x="227.4" y="170.2" width="319.7" height="83.6" fill="none" stroke="#9E9E9E" stroke-width="0.9"/><path d="M386.9 162.3 V170" stroke="#9E9E9E" stroke-width="0.9"/><path d="M390.3 158.1 A3.5 3.5 0 1 0 390.3 160.1" stroke="#858585" stroke-width="1.7" fill="none"/><path d="M389 159.2 L391.5 159.2 L391.5 156.6" stroke="#858585" stroke-width="1" fill="none"/><circle cx="227.4" cy="170.2" r="3.2" fill="#fff" stroke="#7a7a7a" stroke-width="0.9"/><circle cx="386.9" cy="170.2" r="3.2" fill="#fff" stroke="#7a7a7a" stroke-width="0.9"/><circle cx="547.1" cy="170.2" r="3.2" fill="#fff" stroke="#7a7a7a" stroke-width="0.9"/><circle cx="227.4" cy="212.2" r="3.2" fill="#fff" stroke="#7a7a7a" stroke-width="0.9"/><circle cx="547.1" cy="212.2" r="3.2" fill="#fff" stroke="#7a7a7a" stroke-width="0.9"/><circle cx="227.4" cy="253.8" r="3.2" fill="#fff" stroke="#7a7a7a" stroke-width="0.9"/><circle cx="386.9" cy="253.8" r="3.2" fill="#fff" stroke="#7a7a7a" stroke-width="0.9"/><circle cx="547.1" cy="253.8" r="3.2" fill="#fff" stroke="#7a7a7a" stroke-width="0.9"/><rect x="379.4" y="220.7" width="1.3" height="32" fill="#7a7a7a"/></svg>
<div class="t" style="left:257.0px;top:225.7px;font-size:24.5px;font-weight:400;color:#000;transform:scaleX(0.973);-webkit-text-stroke:0.6px #fff">PowerPoint</div>
<div class="t" style="left:385.5px;top:225.7px;font-size:24.5px;font-weight:400;color:#000;transform:scaleX(0.954);-webkit-text-stroke:0.6px #fff">design ideas</div>
<div class="t" style="left:344.7px;top:259.2px;font-size:9.5px;font-weight:400;color:#3a3a3a;transform:scaleX(1.026);">Click to add subtitle</div>
<div class="t" style="left:619.0px;top:112.8px;font-size:12.5px;font-weight:400;color:#252423;transform:scaleX(0.916);-webkit-text-stroke:0.35px #F0F0F0">Designer</div>
<svg style="left:784.3px;top:110.2px" width="10" height="10"><path d="M0.7 0.7 L9.3 9.3 M9.3 0.7 L0.7 9.3" stroke="#505050" stroke-width="0.9"/></svg>
<div class="r" style="left:795.3px;top:167.7px;width:3.3px;height:77.5px;background:#8A8A8A;border-radius:2px"></div>
<svg style="left:633.7px;top:126.7px" width="140.3" height="56.3" viewBox="0 0 140.3 56.3" preserveAspectRatio="none"><g transform="scale(0.995 1)"><defs><pattern id="dots" width="4" height="4" patternUnits="userSpaceOnUse"><circle cx="2" cy="2" r="0.5" fill="#2F8A72"/></pattern></defs><rect width="140.3" height="56.3" fill="#1F6A57"/><path d="M104 0 H140.3 V21.5 H120 C111 21.5 104 14 104 5 Z" fill="#55D3B3"/><path d="M104 0 H140.3 V21.5 H120 C111 21.5 104 14 104 5 Z" fill="url(#dots)"/><path d="M104 56.3 V38 C104 28 111 21.5 121 21.5 H140.3 V56.3 Z" fill="#58B59B"/><path d="M140.3 30 V56.3 H116 C131 56.3 140.3 46 140.3 30 Z" fill="#1F6A57"/><circle cx="109.6" cy="23" r="2.1" fill="#55D3B3"/><rect x="2.3" y="39.3" width="14" height="14.4" fill="#173F35"/><path d="M9.5 43 L10.4 45.3 L12.8 45.3 L10.9 46.8 L11.6 49.2 L9.5 47.7 L7.4 49.2 L8.1 46.8 L6.2 45.3 L8.6 45.3 Z" fill="#fff"/><path d="M5 44.5 h1.2 M5 46.5 h1 M5 48.5 h1.2" stroke="#fff" stroke-width="0.5"/></g></svg>
<div class="t" style="left:639.9px;top:135.1px;font-size:7.5px;font-weight:400;color:#f4f4f4;transform:scaleX(0.935);-webkit-text-stroke:0.25px #f4f4f4">PowerPoint design ideas</div>
<div class="t" style="left:639.7px;top:145.2px;font-size:4.2px;font-weight:700;color:#dfeee9;transform:scaleX(0.742);">Click to add subtitle</div>
<svg style="left:633.6px;top:191.2px" width="141" height="79.8"><rect width="141" height="79.8" fill="#E7E5E0"/><rect x="0" y="10" width="12" height="29.4" fill="#3F6BC6"/><rect x="12" y="10" width="67" height="29.4" fill="#3D2A22"/><rect x="11.6" y="0" width="0.8" height="79.8" fill="#5a5048"/><rect x="79" y="0" width="62" height="79.8" fill="#EDEDEB"/><rect x="78.6" y="0" width="0.9" height="79.8" fill="#4a4a4a"/><path d="M93 0 H110 C110 6 112 10 116 12 L112 19 C104 16 99 11 95 7 Z" fill="#D9655E"/><path d="M116 0 H124 C123 4 122 8 119 11 L114 9 Z" fill="#DA7A70"/><path d="M104 14 C107 16 110 18 113 18 L111 21 C107 21 104 19 102 17 Z" fill="#E8C1A6"/><circle cx="121.1" cy="17.6" r="7.3" fill="#3F7CC0"/><circle cx="101.4" cy="37.3" r="16.2" fill="#D8B43E"/><path d="M96 42 C91.5 38 93.5 30 101 30 C108.5 30 110.5 38 106 42 L105.5 46 H96.5 Z M97.5 48 H104.5" stroke="#6a5a2a" stroke-width="0.7" fill="none"/><path d="M96 26 l2 -3 l-1 -1 l2 -3 M101.5 26 l2 -4 l-2 0 l2 -3 M106 26 l1.5 -3" stroke="#6a5a2a" stroke-width="0.6" fill="none"/><circle cx="125.3" cy="40.4" r="4" fill="none" stroke="#9a9a9a" stroke-width="0.7"/><circle cx="125.3" cy="40.4" r="2.2" fill="none" stroke="#b0b0b0" stroke-width="0.5"/><circle cx="132.5" cy="45.2" r="3.4" fill="none" stroke="#9a9a9a" stroke-width="0.7"/><circle cx="130.9" cy="60.2" r="10.3" fill="#4FAE8B"/><path d="M130 65 L137 60 L141 62 V72 L135 72 Z" fill="#D8333F"/><path d="M136 60 L141 57 V63 Z" fill="#3A67C8"/><circle cx="100.9" cy="68.5" r="5.2" fill="#D46B4C"/><path d="M96 78 C99 74 104 72 109 71.5 L110 74.5 C105 75.5 101 77 99 79.8 H96 Z" fill="#6E4231"/><path d="M118 66 C120 63 124 63 125 66 L129 75 C130 78 127 79 125 77 Z" fill="#6E4231"/><path d="M82 8 L90 14 M82 22 h8 M83 50 l6 4 M112 54 h10 M118 32 l8 -2 M84 12 l4 4 M112 26 h14 M86 40 v8 M128 18 l8 6 M90 60 l6 3" stroke="#b8b8b8" stroke-width="0.5"/><rect x="138" y="26" width="1.6" height="6" fill="#D9655E"/><path d="M120 0 H141 V21 Z" fill="#fff"/><path d="M131 5.5 h4 l1.4 2 l-3.4 4 l-3.4 -4 Z" fill="none" stroke="#3F6BC6" stroke-width="0.6"/><rect x="2.4" y="62.8" width="14.2" height="13.8" fill="#7B7B7B"/><path d="M9.8 66.5 L10.6 68.6 L12.8 68.6 L11 70 L11.7 72.2 L9.8 70.8 L7.9 72.2 L8.6 70 L6.8 68.6 L9 68.6 Z" fill="#fff"/><path d="M5.5 68.5 h1 M5.5 70.3 h0.9 M5.5 72 h1" stroke="#fff" stroke-width="0.5"/><rect x="0" y="0" width="141" height="79.8" fill="none" stroke="#D0D0D0" stroke-width="0.8"/></svg>
<div class="t" style="left:653.4px;top:209.0px;font-size:6px;font-weight:400;color:#ECE6E2;transform:scaleX(1.115);">POWERPOINT</div>
<div class="t" style="left:653.4px;top:218.5px;font-size:6px;font-weight:400;color:#ECE6E2;transform:scaleX(1.172);">DESIGN IDEAS</div>
<div class="t" style="left:653.4px;top:238.1px;font-size:4.5px;font-weight:400;color:#8a8580;transform:scaleX(0.992);">Click to add subtitle</div>
<svg style="left:633.3px;top:279.4px" width="141.5" height="78.4"><defs><pattern id="grid" width="9.5" height="9.5" patternUnits="userSpaceOnUse" x="2" y="3"><path d="M9.5 0 V9.5 M0 9.5 H9.5" stroke="#D9D6CF" stroke-width="0.5"/></pattern><linearGradient id="g3" x1="0" y1="0" x2="1" y2="1"><stop offset="0" stop-color="#ECEBE6"/><stop offset="1" stop-color="#E9E6E0"/></linearGradient></defs><rect width="141.5" height="78.4" fill="url(#g3)"/><rect width="141.5" height="78.4" fill="url(#grid)"/><path d="M0 0 H25 L0 32 Z" fill="#ABABA7"/><path d="M48 22 L62 12 L74 18 L66 32 Z" fill="#D6DEB0" opacity="0.8"/><path d="M58 10 L75 2 L90 8 L72 20 Z" fill="#EFE2C8" opacity="0.7"/><path d="M0 36 L35 41 L62 50 L80 60 L96 78.4 H0 Z" fill="#A9A8A3"/><path d="M50 36 L68 23 L141.5 42 V60 L118 56 L80 50 L60 46 Z" fill="#BDBAB3"/><path d="M62 50 L96 78.4 H80 L55 56 Z" fill="#9E9D98"/><path d="M48 63 C53 57 63 58 70 63 L69 66.5 C62 62 55 61 50 66 Z" fill="#D9C658"/><path d="M105 31 L141.5 42" stroke="#E59A90" stroke-width="1"/><path d="M75 63.6 L103 77" stroke="#E59A90" stroke-width="1"/><path d="M120 0 H141.5 V21 Z" fill="#fff"/><path d="M131.5 3.5 h4 l1.4 2 l-3.4 4 l-3.4 -4 Z" fill="none" stroke="#444" stroke-width="0.6"/><rect x="0" y="0" width="141.5" height="78.4" fill="none" stroke="#D4D4D4" stroke-width="0.8"/></svg>
<div class="t" style="left:688.8px;top:315.0px;font-size:4.2px;font-weight:400;color:#6a6a6a;transform:scaleX(0.884);">Click to add subtitle</div>
<div class="t" style="left:670.3px;top:320.5px;font-size:8px;font-weight:400;color:#474747;transform:scaleX(1.028);">PowerPoint design</div>
<div class="t" style="left:695.8px;top:328.8px;font-size:8px;font-weight:400;color:#474747;transform:scaleX(0.967);">ideas</div>
<svg style="left:633.4px;top:367px" width="141.2" height="20"><defs><pattern id="grid4" width="11.3" height="13" patternUnits="userSpaceOnUse" x="-4" y="1"><path d="M11.3 0 V13 M0 13 H11.3" stroke="#DDE0E6" stroke-width="0.5"/></pattern></defs><rect width="141.2" height="20" fill="#fff"/><rect width="141.2" height="20" fill="url(#grid4)"/><rect x="0" y="0" width="141.2" height="20" fill="none" stroke="#D4D4D4" stroke-width="0.8"/></svg>
<div class="t" style="left:14.7px;top:394.9px;font-size:7.5px;font-weight:400;color:#4a4948;transform:scaleX(0.917);">Slide 1 of 1</div>
<div class="t" style="left:60.7px;top:394.9px;font-size:7.5px;font-weight:400;color:#4a4948;transform:scaleX(0.858);">English (U.S.)</div>
<div class="t" style="left:435.0px;top:394.6px;font-size:7.5px;font-weight:400;color:#4a4948;transform:scaleX(0.942);">Give Feedback to Microsoft</div>
<svg style="left:530px;top:394.5px" width="9" height="7"><path d="M0.5 3 L4 0.5 L7.5 3 M0.5 4.5 H7.5 M0.5 6.3 H7.5" stroke="#3b3a39" stroke-width="0.8" fill="none"/></svg>
<div class="t" style="left:540.0px;top:394.6px;font-size:7.5px;font-weight:400;color:#4a4948;transform:scaleX(0.919);">Notes</div>
<div class="r" style="left:562.5px;top:391px;width:23.5px;height:13px;background:#E1DFDD"></div>
<svg style="left:0;top:0" width="801" height="404"><rect x="569.5" y="395" width="9" height="7" fill="none" stroke="#3b3a39" stroke-width="0.9"/><rect x="570.5" y="396" width="2" height="5" fill="#3b3a39"/><path d="M573 397 h5" stroke="#3b3a39" stroke-width="0.7"/><rect x="592.8" y="395" width="3.4" height="2.6" fill="none" stroke="#3b3a39" stroke-width="0.7"/><rect x="597.8" y="395" width="3.4" height="2.6" fill="none" stroke="#3b3a39" stroke-width="0.7"/><rect x="592.8" y="399.3" width="3.4" height="2.6" fill="none" stroke="#3b3a39" stroke-width="0.7"/><rect x="597.8" y="399.3" width="3.4" height="2.6" fill="none" stroke="#3b3a39" stroke-width="0.7"/><rect x="620.2" y="394.5" width="6" height="4.5" fill="none" stroke="#3b3a39" stroke-width="0.8"/><path d="M623.2 399 V402 M621.5 402.2 h3.4 M621.8 396.5 h3" stroke="#3b3a39" stroke-width="0.7"/><path d="M643 398.5 h6" stroke="#3b3a39" stroke-width="0.9"/><path d="M660 397.9 H716.4" stroke="#8a8a8a" stroke-width="0.8"/><rect x="664.6" y="394" width="4.4" height="7.8" fill="#4a4948"/><path d="M726.4 398.5 h6 M729.4 395.5 v6" stroke="#3b3a39" stroke-width="0.9"/><path d="M783.5 394.5 V402.5 M779.5 398.5 H787.5" stroke="#3b3a39" stroke-width="0.8"/><circle cx="783.5" cy="398.5" r="2.5" fill="#F3F2F1" stroke="#3b3a39" stroke-width="0.8"/></svg>
<div class="t" style="left:749.4px;top:394.6px;font-size:7.5px;font-weight:400;color:#4a4948;transform:scaleX(0.906);">56%</div>
</body></html>
